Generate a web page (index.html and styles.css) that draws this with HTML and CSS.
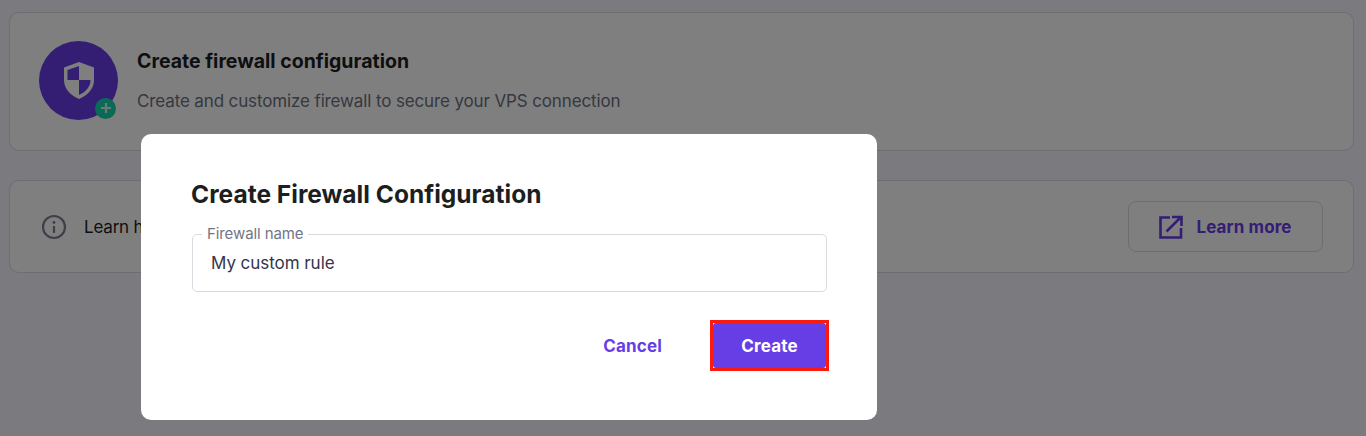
FILE: index.html
```html
<!DOCTYPE html>
<html lang="en">
<head>
  <meta charset="UTF-8">
  <title>Create firewall configuration</title>
  <link rel="stylesheet" href="styles.css">
</head>
<body>
  <div class="page">
    <div class="card create-card">
      <div class="shield">
        <svg width="30" height="37" viewBox="0 0 30 37">
          <path d="M15 0 L30 5.500 V18 C30 27 23.500 33.500 15 37 C6.500 33.500 0 27 0 18 V5.500 Z" fill="#fff"/>
          <path d="M15 4 L3.500 8 V18 H15 Z M15 18 V33 C21.500 30 26.500 25 26.500 18 Z" fill="#673de6"/>
        </svg>
        <span class="plus">
          <svg width="12" height="12" viewBox="0 0 12 12"><path d="M6 1 V11 M1 6 H11" stroke="#fff" stroke-opacity="0.8" stroke-width="2.200"/></svg>
        </span>
      </div>
      <div class="create-text">
        <h3>Create firewall configuration</h3>
        <p>Create and customize firewall to secure your VPS connection</p>
      </div>
    </div>

    <div class="card learn-card">
      <svg class="info-icon" width="26" height="26" viewBox="0 0 26 26">
        <circle cx="13" cy="13" r="11" fill="none" stroke="#7d7f90" stroke-width="2.200"/>
        <path d="M13 12 V19" stroke="#7d7f90" stroke-width="2.200"/>
        <circle cx="13" cy="8.500" r="1.400" fill="#7d7f90"/>
      </svg>
      <span class="learn-text">Learn how</span>
      <a class="learn-btn">
        <svg width="24" height="24" viewBox="0 0 24 24" fill="none" stroke="#673de6" stroke-width="2.600">
          <path d="M11 2.500 H1.500 V22.500 H22 V13"/>
          <path d="M7.500 16.500 L21.500 2.500 M13 2 H22.500 V11"/>
        </svg>
        Learn more
      </a>
    </div>
  </div>

  <div class="overlay"></div>

  <div class="modal">
    <h2>Create Firewall Configuration</h2>
    <fieldset class="field">
      <legend>Firewall name</legend>
      <div class="field-value">My custom rule</div>
    </fieldset>
    <div class="actions">
      <button class="btn-cancel">Cancel</button>
      <span class="highlight"><button class="btn-create">Create</button></span>
    </div>
  </div>
</body>
</html>
```

FILE: styles.css
```css
html, body {
  margin: 0;
  padding: 0;
  height: 100%;
  overflow: hidden;
}
body {
  font-family: "Inter", "Open Sans", sans-serif;
  background: #f5f4fe;
  color: #1d1e20;
}
.page {
  padding: 12px 12px 0 9px;
}
.card {
  box-sizing: border-box;
  background: #fff;
  border: 1px solid #dadce0;
  border-radius: 10px;
  display: flex;
  align-items: center;
}
.create-card {
  height: 139px;
  padding-left: 29px;
  margin-bottom: 29px;
}
.shield {
  position: relative;
  width: 79px;
  height: 79px;
  border-radius: 50%;
  background: #673de6;
  display: flex;
  align-items: center;
  justify-content: center;
  flex: none;
  margin-top: -3px;
}
.plus {
  position: absolute;
  right: 2px;
  bottom: 1px;
  width: 21px;
  height: 21px;
  border-radius: 50%;
  background: #16d4aa;
  display: flex;
  align-items: center;
  justify-content: center;
}
.create-text {
  margin-left: 19px;
  margin-top: -2px;
}
.create-text h3 {
  margin: 0 0 16px;
  font-size: 19.500px;
  line-height: 24px;
  font-weight: 700;
  letter-spacing: 0;
}
.create-text p {
  margin: 0;
  font-size: 17px;
  line-height: 24px;
  color: #6d7081;
  letter-spacing: -0.13px;
}
.learn-card {
  height: 93px;
  padding: 0 30px 0 31px;
}
.learn-text {
  margin-left: 17px;
  font-size: 17px;
  letter-spacing: -0.2px;
}
.learn-btn {
  box-sizing: border-box;
  margin-left: auto;
  width: 195px;
  height: 51px;
  border: 1px solid #dadce0;
  border-radius: 8px;
  display: flex;
  align-items: center;
  justify-content: center;
  gap: 13px;
  color: #673de6;
  font-size: 17px;
  font-weight: 700;
  letter-spacing: 0.1px;
}
.overlay {
  position: fixed;
  inset: 0;
  background: rgba(0, 0, 0, 0.5);
}
.modal {
  position: absolute;
  left: 141px;
  top: 134px;
  box-sizing: border-box;
  width: 736px;
  height: 286px;
  background: #fff;
  border-radius: 10px;
  padding: 44px 50px 0;
}
.modal h2 {
  margin: 0 0 20px;
  font-size: 24.500px;
  line-height: 32px;
  font-weight: 700;
  letter-spacing: 0.02px;
}
.field {
  box-sizing: border-box;
  height: 67px;
  margin: -5px 0 0 1px;
  padding: 0 0 0 18px;
  border: 1px solid #d8dae0;
  border-radius: 5px;
}
.field legend {
  padding: 0 5px;
  margin-left: -9px;
  font-size: 15px;
  line-height: 18px;
  color: #727586;
  letter-spacing: -0.1px;
}
.field-value {
  font-size: 17px;
  line-height: 24px;
  margin-top: 8px;
  color: #36344d;
  letter-spacing: -0.05px;
}
.actions {
  display: flex;
  justify-content: flex-end;
  align-items: center;
  margin-top: 28px;
  margin-right: -2px;
}
.actions button {
  font-family: inherit;
  font-size: 17px;
  font-weight: 700;
  border: none;
  letter-spacing: 0.15px;
}
.btn-cancel {
  background: none;
  color: #673de6;
  padding: 0;
  margin-right: 48px;
}
.highlight {
  display: block;
  border: 3px solid #fb1a0f;
  background: #fff;
}
.btn-create {
  display: block;
  width: 113px;
  height: 45px;
  background: #673de6;
  border-radius: 3px;
  color: #fff;
}
```
